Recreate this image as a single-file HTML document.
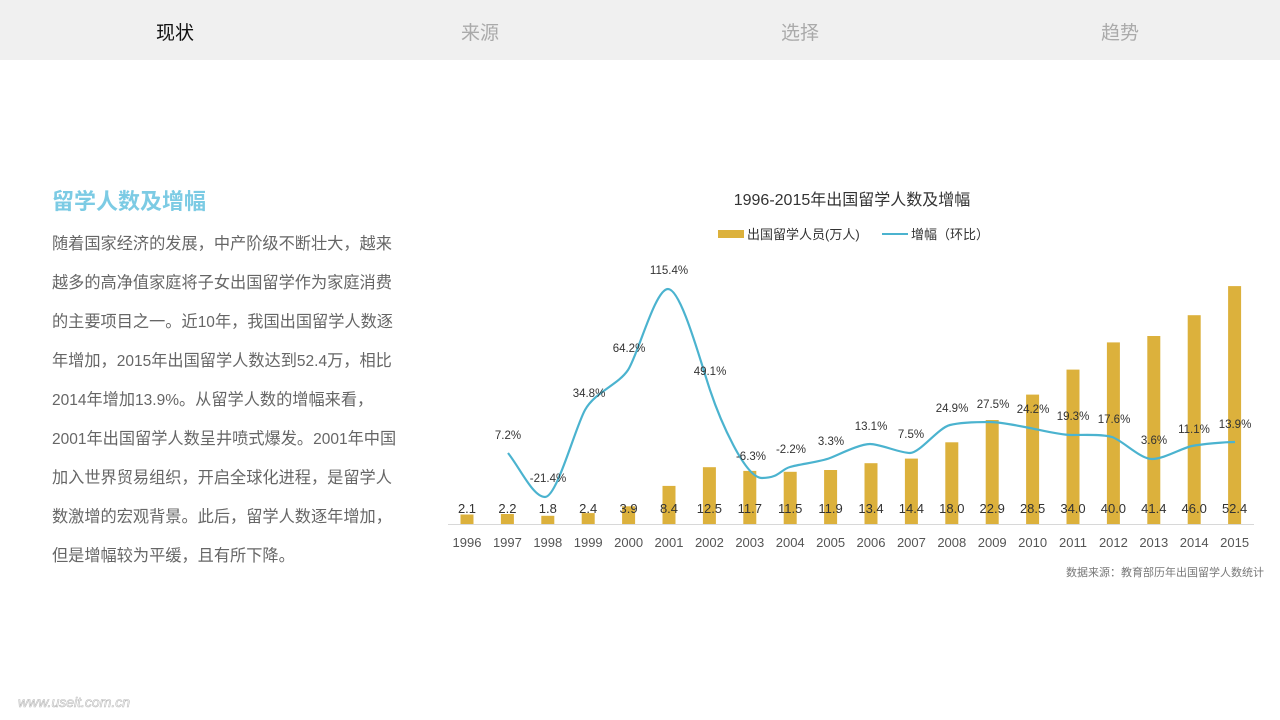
<!DOCTYPE html>
<html><head><meta charset="utf-8"><style>
body{margin:0;width:1280px;height:720px;background:#fff;font-family:"Liberation Sans","Noto Sans CJK SC",sans-serif;position:relative;overflow:hidden}
.nav{position:absolute;left:0;top:0;width:1280px;height:60px;background:#f0f0f0}
.nav span{position:absolute;top:18px;font-size:19px;color:#aaa;transform:translateX(-50%)}
h2{position:absolute;left:52px;top:184px;margin:0;font-size:22px;font-weight:bold;color:#7ccbe4}
.p{position:absolute;left:52px;top:225px;font-size:16.2px;line-height:39px;color:#666;white-space:nowrap}
.p .n{font-size:15.5px}
svg{position:absolute;left:0;top:0}
</style></head><body>
<div class="nav"><span style="left:175px;color:#111">现状</span><span style="left:480px">来源</span><span style="left:800px">选择</span><span style="left:1120px">趋势</span></div>
<h2>留学人数及增幅</h2>
<div class="p">随着国家经济的发展，中产阶级不断壮大，越来<br>越多的高净值家庭将子女出国留学作为家庭消费<br>的主要项目之一。近<span class="n">10</span>年，我国出国留学人数逐<br>年增加，<span class="n">2015</span>年出国留学人数达到<span class="n">52.4</span>万，相比<br><span class="n">2014</span>年增加<span class="n">13.9%</span>。从留学人数的增幅来看，<br><span class="n">2001</span>年出国留学人数呈井喷式爆发。<span class="n">2001</span>年中国<br>加入世界贸易组织，开启全球化进程，是留学人<br>数激增的宏观背景。此后，留学人数逐年增加，<br>但是增幅较为平缓，且有所下降。</div>
<svg width="1280" height="720" font-family="Liberation Sans, Noto Sans CJK SC, sans-serif">
<text x="852" y="205" font-size="16" fill="#333" text-anchor="middle">1996-2015年出国留学人数及增幅</text>
<rect x="718" y="230" width="26" height="8" fill="#dcb13c"/>
<text x="747" y="239" font-size="13" fill="#333">出国留学人员(万人)</text>
<line x1="882" y1="234" x2="908" y2="234" stroke="#4bb3cf" stroke-width="2"/>
<text x="911" y="239" font-size="13" fill="#333">增幅（环比）</text>
<line x1="448" y1="524.5" x2="1254" y2="524.5" stroke="#d8d8d8" stroke-width="1"/>
<g fill="#dcb13c">
<rect x="460.5" y="514.5" width="13" height="9.5"/><rect x="500.9" y="514" width="13" height="10"/><rect x="541.3" y="515.8" width="13" height="8.2"/><rect x="581.7" y="513.1" width="13" height="10.9"/><rect x="622.1" y="506.3" width="13" height="17.7"/><rect x="662.5" y="485.9" width="13" height="38.1"/><rect x="702.9" y="467.2" width="13" height="56.8"/><rect x="743.3" y="470.9" width="13" height="53.1"/><rect x="783.7" y="471.8" width="13" height="52.2"/><rect x="824.1" y="470" width="13" height="54"/><rect x="864.5" y="463.2" width="13" height="60.8"/><rect x="904.9" y="458.6" width="13" height="65.4"/><rect x="945.3" y="442.3" width="13" height="81.7"/><rect x="985.7" y="420" width="13" height="104"/><rect x="1026.1" y="394.6" width="13" height="129.4"/><rect x="1066.5" y="369.6" width="13" height="154.4"/><rect x="1106.9" y="342.4" width="13" height="181.6"/><rect x="1147.3" y="336" width="13" height="188"/><rect x="1187.7" y="315.2" width="13" height="208.8"/><rect x="1228.1" y="286.1" width="13" height="237.9"/>
</g>
<path d="M508,453 C520,468 533,497 545,497 S575,428 585,410 S618,385 628,370 S655,289 668,289 S700,360 710,390 S745,478 762,478 S780,470 790,467 S820,462 830,458 S860,444 870,444 S900,453 910,453 S938,428 950,425 S980,422 990,422 S1020,426 1030,428 S1060,435 1071,435 S1102,434 1112,437 S1140,459 1152,459 S1182,448 1192,446 S1225,442 1235,442" fill="none" stroke="#4bb3cf" stroke-width="2.2"/>
<g font-size="13" fill="#333" text-anchor="middle">
<text x="467" y="513">2.1</text><text x="507.4" y="513">2.2</text><text x="547.8" y="513">1.8</text><text x="588.2" y="513">2.4</text><text x="628.6" y="513">3.9</text><text x="669" y="513">8.4</text><text x="709.4" y="513">12.5</text><text x="749.8" y="513">11.7</text><text x="790.2" y="513">11.5</text><text x="830.6" y="513">11.9</text><text x="871" y="513">13.4</text><text x="911.4" y="513">14.4</text><text x="951.8" y="513">18.0</text><text x="992.2" y="513">22.9</text><text x="1032.6" y="513">28.5</text><text x="1073" y="513">34.0</text><text x="1113.4" y="513">40.0</text><text x="1153.8" y="513">41.4</text><text x="1194.2" y="513">46.0</text><text x="1234.6" y="513">52.4</text>
</g>
<g font-size="13" fill="#555" text-anchor="middle">
<text x="467" y="547">1996</text><text x="507.4" y="547">1997</text><text x="547.8" y="547">1998</text><text x="588.2" y="547">1999</text><text x="628.6" y="547">2000</text><text x="669" y="547">2001</text><text x="709.4" y="547">2002</text><text x="749.8" y="547">2003</text><text x="790.2" y="547">2004</text><text x="830.6" y="547">2005</text><text x="871" y="547">2006</text><text x="911.4" y="547">2007</text><text x="951.8" y="547">2008</text><text x="992.2" y="547">2009</text><text x="1032.6" y="547">2010</text><text x="1073" y="547">2011</text><text x="1113.4" y="547">2012</text><text x="1153.8" y="547">2013</text><text x="1194.2" y="547">2014</text><text x="1234.6" y="547">2015</text>
</g>
<g font-size="11.5" fill="#333" text-anchor="middle">
<text x="508" y="439">7.2%</text><text x="548" y="482">-21.4%</text><text x="589" y="397">34.8%</text><text x="629" y="352">64.2%</text><text x="669" y="274">115.4%</text><text x="710" y="375">49.1%</text><text x="751" y="460">-6.3%</text><text x="791" y="453">-2.2%</text><text x="831" y="445">3.3%</text><text x="871" y="430">13.1%</text><text x="911" y="438">7.5%</text><text x="952" y="412">24.9%</text><text x="993" y="408">27.5%</text><text x="1033" y="413">24.2%</text><text x="1073" y="420">19.3%</text><text x="1114" y="423">17.6%</text><text x="1154" y="444">3.6%</text><text x="1194" y="433">11.1%</text><text x="1235" y="428">13.9%</text>
</g>
<text x="1264" y="576" font-size="11" fill="#777" text-anchor="end">数据来源：教育部历年出国留学人数统计</text>
<text x="18" y="707" font-size="14" fill="#fff" stroke="#bbb" stroke-width="0.6" font-style="italic">www.useit.com.cn</text>
</svg>
</body></html>
